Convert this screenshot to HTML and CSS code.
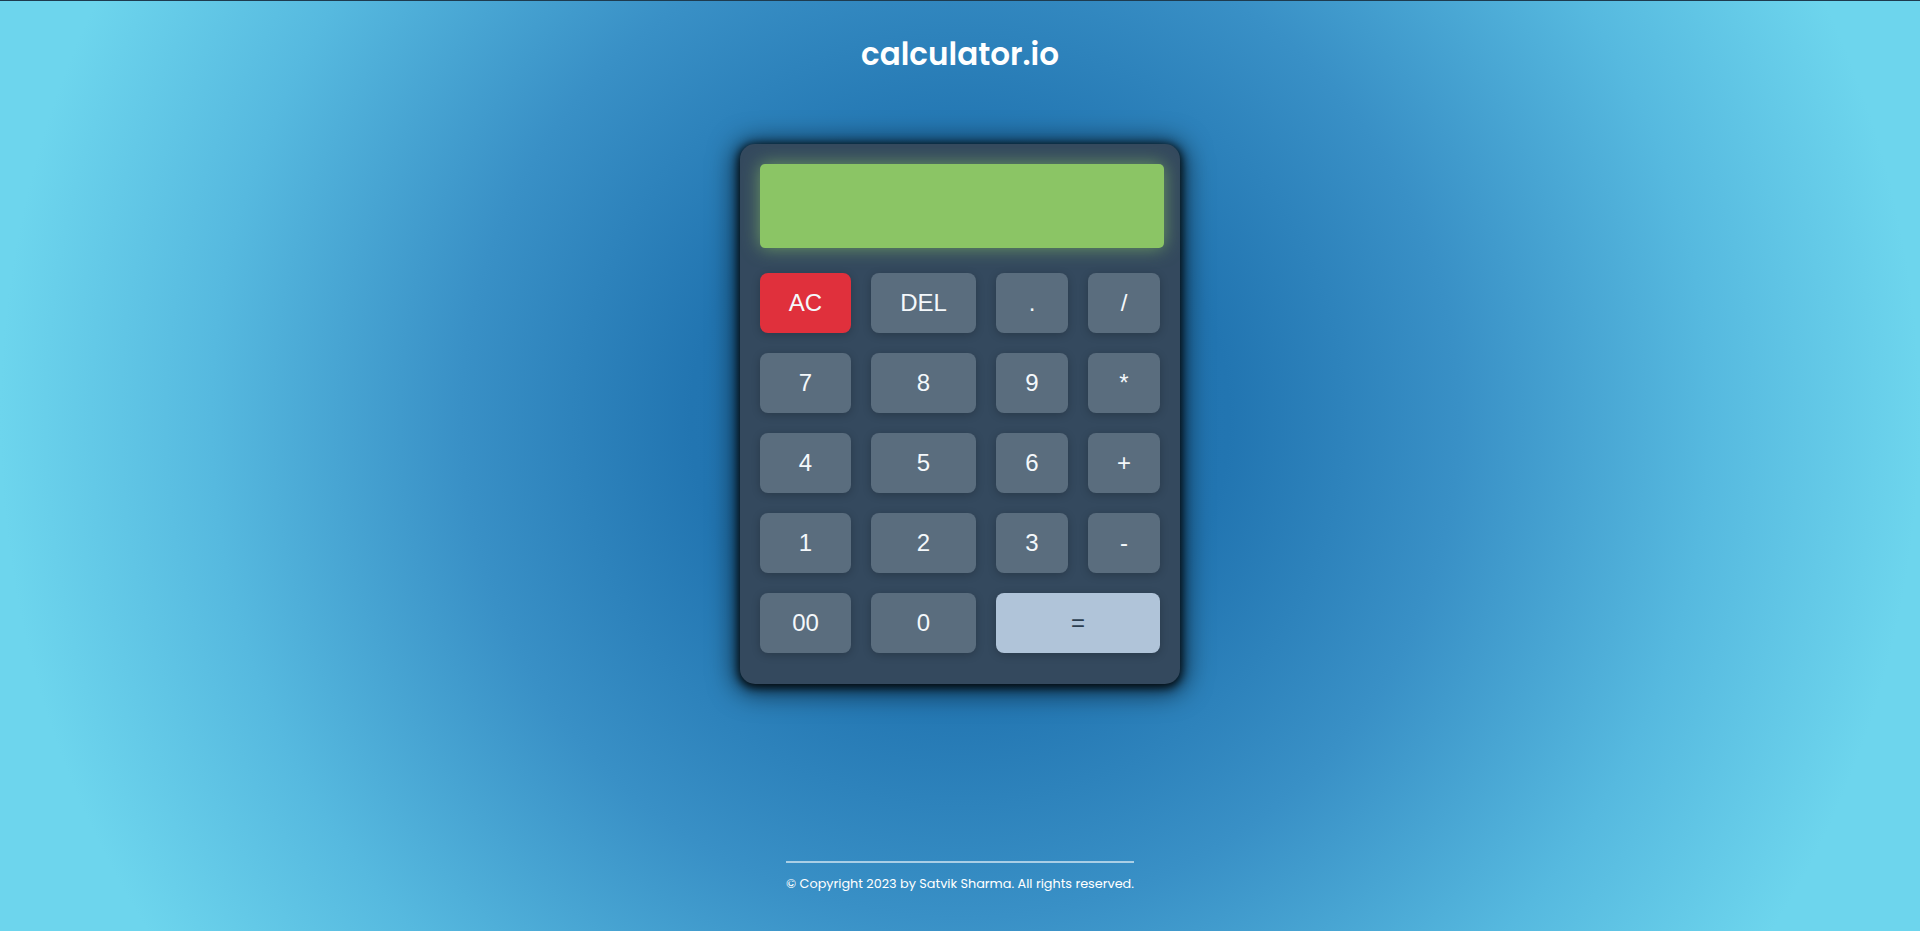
FILE: index.html
```html
<!DOCTYPE html>
<html lang="en">
<head>
<meta charset="utf-8">
<title>calculator.io</title>
<link rel="stylesheet" href="styles.css">
</head>
<body>
<div class="page">
  <header class="header">
    <h1 class="logo">calculator.io</h1>
  </header>
  <main class="calculator">
    <div class="display"></div>
    <div class="keys">
      <button class="key key-clear">AC</button>
      <button class="key">DEL</button>
      <button class="key">.</button>
      <button class="key">/</button>
      <button class="key">7</button>
      <button class="key">8</button>
      <button class="key">9</button>
      <button class="key">*</button>
      <button class="key">4</button>
      <button class="key">5</button>
      <button class="key">6</button>
      <button class="key">+</button>
      <button class="key">1</button>
      <button class="key">2</button>
      <button class="key">3</button>
      <button class="key">-</button>
      <button class="key">00</button>
      <button class="key">0</button>
      <button class="key key-equals">=</button>
    </div>
  </main>
  <footer class="footer">
    <p class="copyright">© Copyright 2023 by Satvik Sharma. All rights reserved.</p>
  </footer>
</div>
</body>
</html>
```
FILE: styles.css
```css
* { box-sizing: border-box; }
html, body { margin: 0; padding: 0; }
body {
  height: 931px;
  overflow: hidden;
  background: radial-gradient(circle farthest-side at 50% 45%, #1e6ca9 0%, #2275b1 28%, #3990c6 52%, #56b9df 78%, #6dd5ed 100%);
  font-family: "Liberation Sans", Arial, sans-serif;
}
.page {
  border-top: 1px solid #1e3b4f;
  display: flex;
  flex-direction: column;
  align-items: center;
  min-height: 931px;
}
.header {
  padding-top: 32px;
}
.logo {
  margin: 0;
  font-family: Poppins, Inter, "Open Sans", sans-serif;
  font-weight: 600;
  font-size: 31px;
  line-height: 42px;
  color: #ffffff;
}
.calculator {
  margin-top: 69px;
  width: 440px;
  padding: 20px 16px 31px 20px;
  background: #34495e;
  border-radius: 15px;
  box-shadow: 0 2px 10px 2px rgba(0, 0, 0, 0.85), 0 3px 26px 6px rgba(0, 0, 0, 0.6);
}
.display {
  width: 404px;
  height: 84px;
  background: #8bc565;
  border-radius: 5px;
  box-shadow: 0 0 18px rgba(139, 197, 101, 0.65);
}
.keys {
  margin-top: 25px;
  display: grid;
  grid-template-columns: 91px 105px 72px 72px;
  grid-auto-rows: 60px;
  gap: 20px;
}
.key {
  border: none;
  border-radius: 8px;
  background: #5a6d7e;
  color: #f4f8fb;
  font-family: "Liberation Sans", Arial, sans-serif;
  font-size: 24px;
  padding: 0;
  box-shadow: 0 2px 8px rgba(0, 0, 0, 0.22);
}
.key-clear {
  background: #e0303c;
}
.key-equals {
  grid-column: span 2;
  background: #b0c4d9;
  color: #2c3e50;
}
.footer {
  margin-top: 177px;
}
.copyright {
  margin: 0;
  padding-top: 11px;
  border-top: 2px solid rgba(220, 235, 245, 0.7);
  font-family: Poppins, Inter, "Open Sans", sans-serif;
  font-size: 12.8px;
  line-height: 20px;
  color: #ffffff;
}
```
